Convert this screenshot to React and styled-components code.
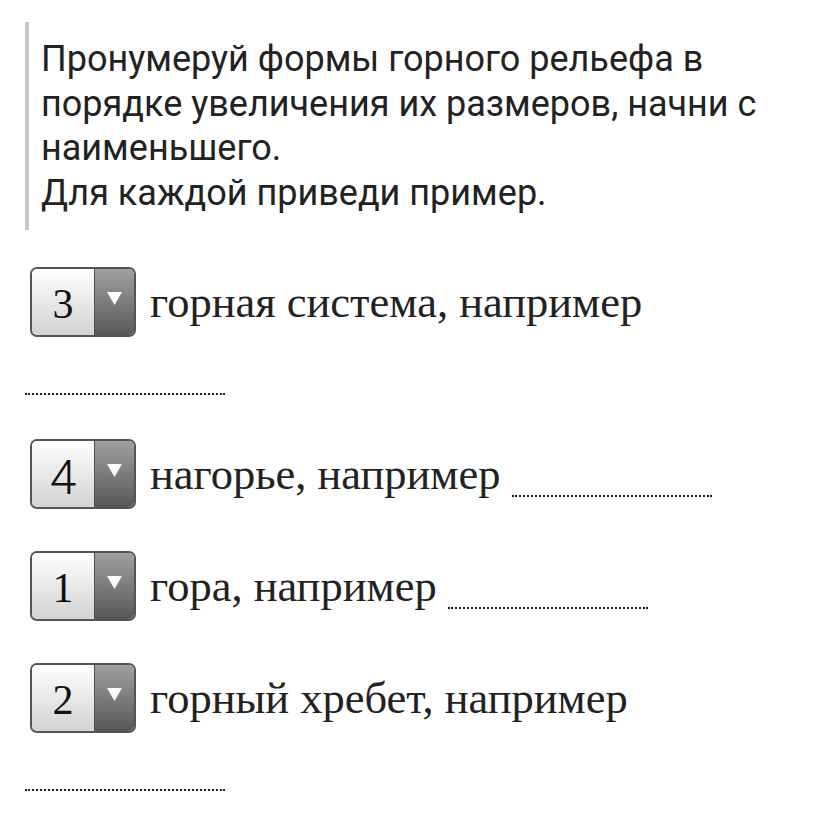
import React from "react";
import styled, { createGlobalStyle } from "styled-components";

const GlobalStyle = createGlobalStyle`
  body {
    margin: 0;
    background: #ffffff;
  }
`;

const Page = styled.div`
  width: 828px;
  padding: 22px 20px 0 25px;
  box-sizing: border-box;
`;

const Quote = styled.div`
  border-left: 4px solid #c6c6c6;
  padding: 15px 0 14px 12px;
  font-family: Roboto, "Noto Sans", sans-serif;
  font-size: 36px;
  line-height: 44.7px;
  color: #222222;
`;

const Tasks = styled.div`
  margin-top: 37px;
  font-family: "Liberation Serif", "DejaVu Serif", serif;
  font-size: 44.5px;
  color: #222222;
`;

const Row = styled.div`
  line-height: 50px;
  margin-bottom: 42px;
`;

const Select = styled.span`
  display: inline-block;
  vertical-align: -20.3px;
  width: 106px;
  height: 70px;
  margin: 0 14px 0 5px;
  box-sizing: border-box;
  border: 2px solid #555555;
  border-radius: 7px;
  overflow: hidden;
`;

const SelectBody = styled.span`
  display: flex;
  height: 100%;
`;

const Value = styled.span`
  flex: 1;
  display: flex;
  align-items: center;
  justify-content: center;
  padding-top: ${(p) => (p.$sans ? "8px" : "4px")};
  background: linear-gradient(#ffffff, #d2d2d2);
  font-family: ${(p) =>
    p.$sans ? 'Roboto, "Liberation Sans", sans-serif' : '"Liberation Serif", serif'};
  font-weight: ${(p) => (p.$sans ? 300 : 400)};
  font-size: ${(p) => (p.$sans ? "48px" : "42px")};
  color: #111111;
  line-height: 1;
`;

const Arrow = styled.span`
  width: 40px;
  display: flex;
  justify-content: center;
  padding-top: 23px;
  box-sizing: border-box;
  border-left: 1px solid #505050;
  background: linear-gradient(#a0a0a0, #585858);
`;

const Blank = styled.span`
  display: inline-block;
  width: 200px;
  height: 6px;
  margin-top: 50px;
  border-bottom: 2px dotted #222222;
  vertical-align: -8px;
`;

function Triangle() {
  return (
    <svg width="15" height="13" viewBox="0 0 15 13">
      <path d="M0 0 H15 L7.5 13 Z" fill="#ffffff" />
    </svg>
  );
}

const tasks = [
  { n: "3", text: "горная система, например" },
  { n: "4", text: "нагорье, например", sans: true },
  { n: "1", text: "гора, например" },
  { n: "2", text: "горный хребет, например" },
];

export default function App() {
  return (
    <Page>
      <GlobalStyle />
      <Quote>
        Пронумеруй формы горного рельефа в порядке увеличения их размеров, начни с
        наименьшего.
        <br />
        Для каждой приведи пример.
      </Quote>
      <Tasks>
        {tasks.map((t) => (
          <Row key={t.n}>
            <Select>
              <SelectBody>
                <Value $sans={t.sans}>{t.n}</Value>
                <Arrow>
                  <Triangle />
                </Arrow>
              </SelectBody>
            </Select>
            {t.text} <Blank />
          </Row>
        ))}
      </Tasks>
    </Page>
  );
}
